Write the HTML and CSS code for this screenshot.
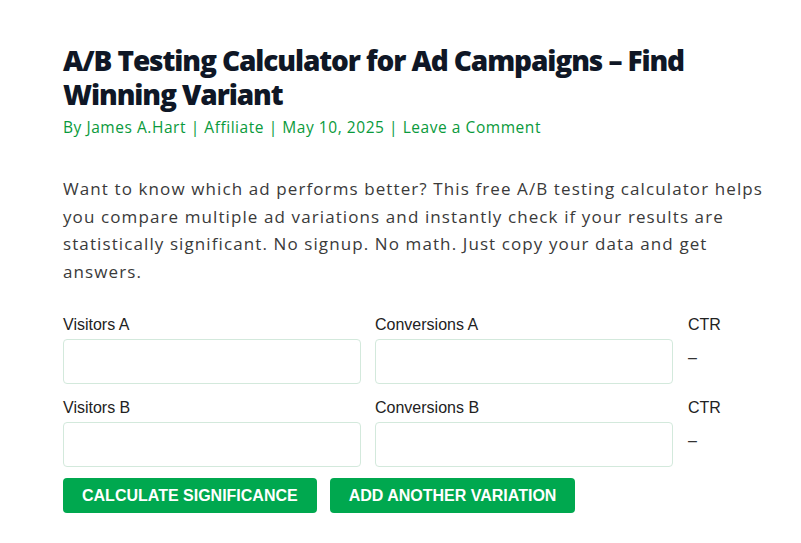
FILE: index.html
```html
<!DOCTYPE html>
<html>
<head>
    <title>A/B Testing Calculator for Ad Campaigns</title>
    <link rel="stylesheet" href="styles.css">
</head>
<body>
    <article class="post">
        <h1 class="post-title">A/B Testing Calculator for Ad Campaigns – Find Winning Variant</h1>
        <div class="post-meta">
            By <a href="#">James A.Hart</a> | <a href="#">Affiliate</a> | <span>May 10, 2025</span> | <a href="#">Leave a Comment</a>
        </div>
        <p class="intro">Want to know which ad performs better? This free A/B testing calculator helps you compare multiple ad variations and instantly check if your results are statistically significant. No signup. No math. Just copy your data and get answers.</p>

        <div class="calc">
            <div class="calc-row">
                <div class="field">
                    <label for="visitors-a">Visitors A</label>
                    <input type="number" id="visitors-a">
                </div>
                <div class="field">
                    <label for="conv-a">Conversions A</label>
                    <input type="number" id="conv-a">
                </div>
                <div class="ctr">
                    <span class="ctr-label">CTR</span>
                    <span class="ctr-value">–</span>
                </div>
            </div>
            <div class="calc-row">
                <div class="field">
                    <label for="visitors-b">Visitors B</label>
                    <input type="number" id="visitors-b">
                </div>
                <div class="field">
                    <label for="conv-b">Conversions B</label>
                    <input type="number" id="conv-b">
                </div>
                <div class="ctr">
                    <span class="ctr-label">CTR</span>
                    <span class="ctr-value">–</span>
                </div>
            </div>
            <div class="calc-actions">
                <button class="btn">Calculate Significance</button>
                <button class="btn">Add Another Variation</button>
            </div>
        </div>
    </article>
</body>
</html>
```

FILE: styles.css
```css
body {
    margin: 0;
    background: #fff;
    font-family: 'Open Sans', 'Noto Sans', sans-serif;
    color: #3a3a3a;
}
.post {
    width: 705px;
    padding: 43px 0 0 63px;
}
.post-title {
    margin: 0;
    font-size: 28px;
    line-height: 34px;
    font-weight: 800;
    color: #0f1726;
    letter-spacing: -1.1px;
}
.post-meta {
    margin-top: 4px;
    font-size: 15.5px;
    line-height: 24px;
    letter-spacing: 0.55px;
    color: #0a9a3c;
}
.post-meta a {
    color: #0a9a3c;
    text-decoration: none;
}
.intro {
    margin: 36px 0 0;
    font-size: 17px;
    line-height: 27.5px;
    letter-spacing: 1.1px;
    color: #3a3a3a;
}
.calc {
    margin-top: 31px;
    font-family: 'Liberation Sans', Arial, sans-serif;
}
.calc-row {
    display: grid;
    grid-template-columns: 298px 298px 1fr;
    column-gap: 14px;
}
.calc-row + .calc-row {
    margin-top: 15px;
}
.field {
    display: flex;
    flex-direction: column;
}
.field label,
.ctr-label {
    font-size: 16px;
    line-height: 18px;
    color: #222;
    margin-bottom: 5px;
}
.field input {
    height: 45px;
    box-sizing: border-box;
    border: 1px solid #d3e9dc;
    border-radius: 4px;
    padding: 0 10px;
    font-size: 16px;
    background: #fff;
}
.ctr {
    display: flex;
    flex-direction: column;
    padding-left: 1px;
}
.ctr-value {
    font-size: 16px;
    line-height: 18px;
    color: #333;
    margin-top: 10px;
}
.calc-actions {
    display: flex;
    gap: 13px;
    margin-top: 11px;
}
.btn {
    background: #00a84f;
    color: #fff;
    border: none;
    border-radius: 4px;
    height: 35px;
    padding: 0 19px;
    font-family: 'Liberation Sans', Arial, sans-serif;
    font-size: 16px;
    font-weight: 700;
    text-transform: uppercase;
    cursor: pointer;
}
```
